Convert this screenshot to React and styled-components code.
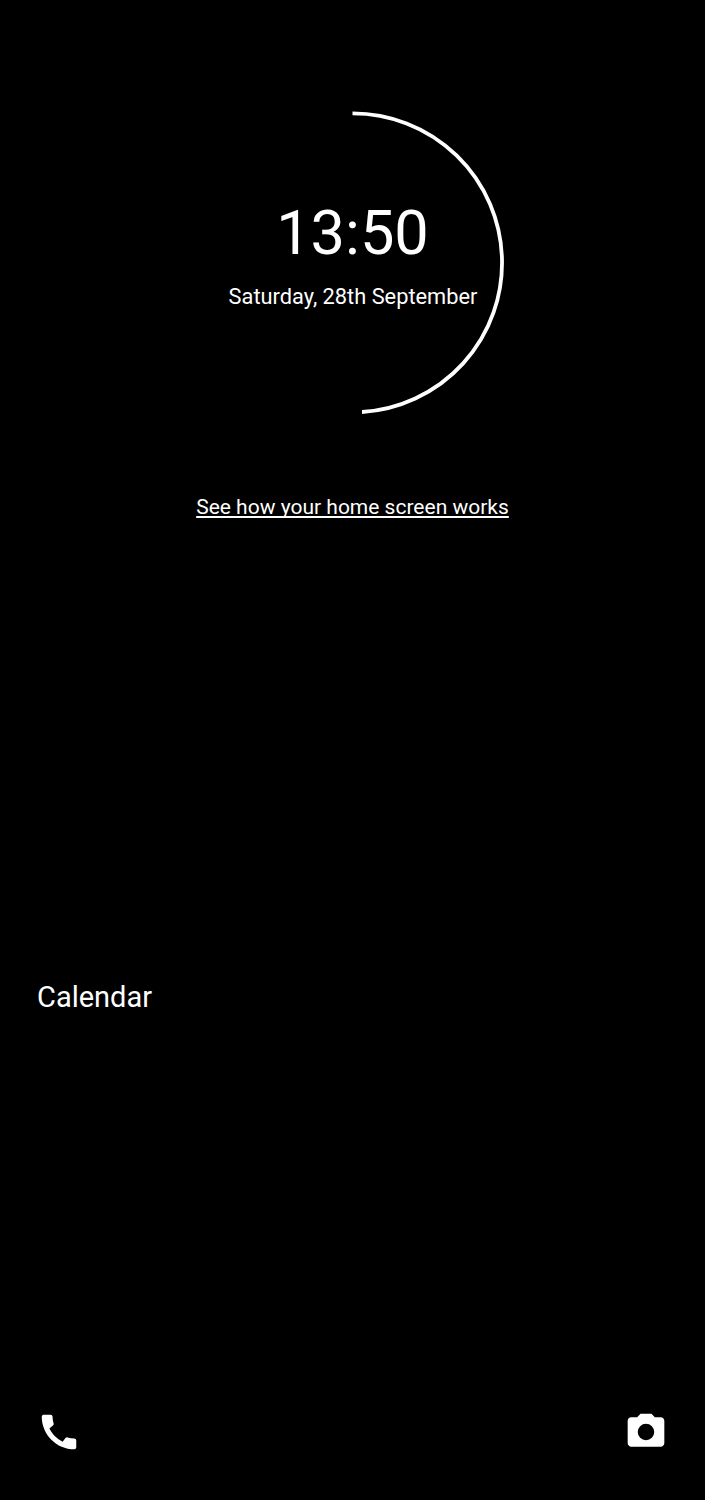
import React from "react";
import styled, { createGlobalStyle } from "styled-components";

const Global = createGlobalStyle`
  html, body { margin: 0; padding: 0; background: #000; }
  body { font-family: Roboto, "Liberation Sans", sans-serif; color: #fff; }
`;

const Screen = styled.main`
  width: 705px;
  height: 1500px;
  background: #000;
  display: flex;
  flex-direction: column;
  overflow: hidden;
`;

const ClockWidget = styled.section`
  position: relative;
  width: 300px;
  height: 300px;
  margin: 113px auto 0;
  display: flex;
  flex-direction: column;
  align-items: center;
`;

const Arc = styled.svg`
  position: absolute;
  left: -2px;
  top: -2px;
  width: 304px;
  height: 304px;
  overflow: visible;
`;

const Time = styled.div`
  margin-top: 83px;
  font-size: 61.3px;
  line-height: 74px;
  font-weight: 400;
  white-space: nowrap;
`;

const DateLine = styled.div`
  margin-top: 14px;
  padding-left: 1px;
  font-size: 21.8px;
  line-height: 26px;
  white-space: nowrap;
`;

const HomeLink = styled.a`
  align-self: center;
  margin-top: 80px;
  font-size: 21px;
  line-height: 28px;
  color: #fff;
  text-decoration: underline;
  text-decoration-skip-ink: none;
  text-underline-offset: 2px;
  white-space: nowrap;
`;

const Section = styled.h2`
  margin: 457px 0 0 37px;
  font-size: 29px;
  line-height: 38px;
  font-weight: 400;
`;

const Shortcuts = styled.footer`
  margin-top: auto;
  padding: 0 37px 45px 36px;
  display: flex;
  justify-content: space-between;
  align-items: center;
`;

const Icon = styled.svg`
  display: block;
  width: ${(p) => p.$size}px;
  height: ${(p) => p.$size}px;
  fill: #fff;
`;

export default function App() {
  return (
    <Screen>
      <Global />
      <ClockWidget>
        <Arc viewBox="0 0 304 304" aria-hidden="true">
          <path
            d="M151.5 2.3 A149.5 149.5 0 0 1 161 301"
            fill="none"
            stroke="#fff"
            strokeWidth="3.8"
          />
        </Arc>
        <Time>13:50</Time>
        <DateLine>Saturday, 28th September</DateLine>
      </ClockWidget>
      <HomeLink>See how your home screen works</HomeLink>
      <Section>Calendar</Section>
      <Shortcuts>
        <Icon $size={46} viewBox="0 0 24 24" aria-label="Phone">
          <path d="M20.01 15.38c-1.23 0-2.42-.2-3.53-.56-.35-.12-.74-.03-1.01.24l-1.57 1.97c-2.83-1.35-5.48-3.9-6.89-6.83l1.95-1.66c.27-.28.35-.67.24-1.02-.37-1.11-.56-2.3-.56-3.53 0-.54-.45-.99-.99-.99H4.19C3.65 3 3 3.24 3 3.99 3 13.28 10.73 21 20.01 21c.71 0 .99-.63.99-1.18v-3.45c0-.54-.45-.99-.99-.99z" />
        </Icon>
        <Icon $size={44} viewBox="0 0 24 24" aria-label="Camera">
          <path
            fillRule="evenodd"
            d="M9 2 7.17 4H4c-1.1 0-2 .9-2 2v12c0 1.1.9 2 2 2h16c1.1 0 2-.9 2-2V6c0-1.1-.9-2-2-2h-3.17L15 2H9zm3 5.5a4.5 4.5 0 1 1 0 9 4.5 4.5 0 0 1 0-9z"
          />
        </Icon>
      </Shortcuts>
    </Screen>
  );
}
